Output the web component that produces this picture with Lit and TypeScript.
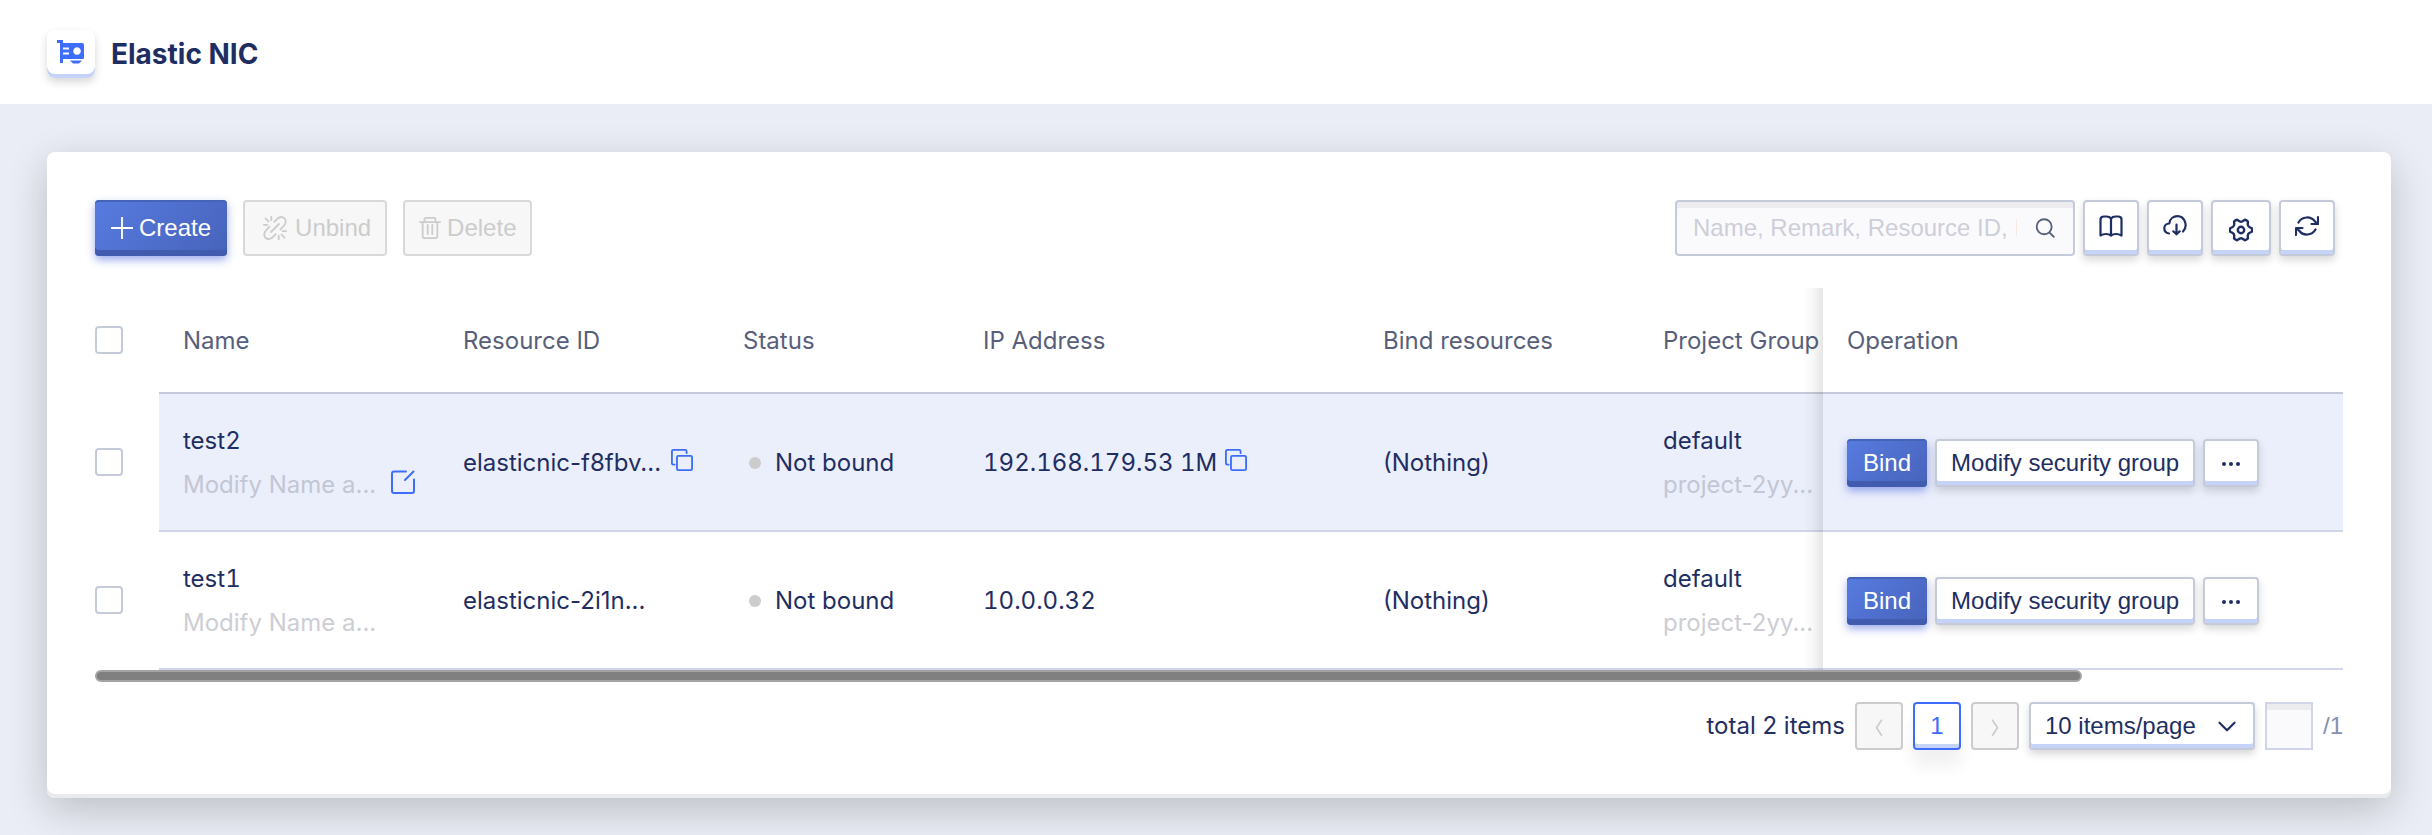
import { LitElement, html, css, svg } from "lit";
import { customElement } from "lit/decorators.js";

interface Nic {
  name: string;
  remark: string;
  id: string;
  ip: string;
  hovered: boolean;
}

const NICS: Nic[] = [
  { name: "test2", remark: "Modify Name a...", id: "elasticnic-f8fbv...", ip: "192.168.179.53 1M", hovered: true },
  { name: "test1", remark: "Modify Name a...", id: "elasticnic-2i1n...", ip: "10.0.0.32", hovered: false },
];

const icon = (body: unknown, size = 24, width = 2) => html`<svg
  class="icon" width=${size} height=${size} viewBox="0 0 24 24" fill="none" stroke="currentColor"
  stroke-width=${width} stroke-linecap="round" stroke-linejoin="round" aria-hidden="true">${body}</svg>`;

// Six rounded teeth with a shallow valley between each pair.
const gearPath = (() => {
  const at = (deg: number, r: number) => {
    const a = (deg * Math.PI) / 180;
    return `${(12 + r * Math.cos(a)).toFixed(2)} ${(12 + r * Math.sin(a)).toFixed(2)}`;
  };
  let d = `M${at(-9, 11)}`;
  for (let k = 0; k < 6; k++) {
    const t = k * 60;
    d += `Q${at(t, 11.4)} ${at(t + 9, 11)}L${at(t + 20, 8.8)}Q${at(t + 30, 7.8)} ${at(t + 40, 8.8)}L${at(t + 51, 11)}`;
  }
  return d + "Z";
})();

const plus = svg`<path d="M12 0v24M0 12h24" stroke-linecap="butt"/>`;
const unlink = svg`<path d="M11.300 5.800L15 2.200Q18.500-.2 21.500 2.300 24 5.500 21.500 9L17.500 13.300M12.700 18.200L9 21.800Q5.500 24.200 2.500 21.700 0 18.500 2.500 15L6.500 10.700M8 16l8-8M8.300.8v3.400M2.500 2.300l3 3M.8 8.800h3.600M15.700 19.800v3.400M18.500 18.700l3 3M19.600 15.200h3.600"/>`;
const trash = svg`<path d="M1 5.500h22M6 5V2.500q0-1.500 1.500-1.500h9q1.500 0 1.500 1.500V5M4 6v15q0 2 2 2h12q2 0 2-2V6M9.500 8.500v10M14.500 8.500v10"/>`;
const search = svg`<circle cx="11" cy="10.500" r="9"/><path d="M17.500 17.500l5 5"/>`;
const book = svg`<path d="M12 4.500Q10.500 2.500 7.500 2.500H5Q1.500 2.500 1.500 5.500V21.500Q4 20 7 20T12 21.500Q14 20 17 20T22.500 21.500V5.500Q22.500 2.500 19 2.500H16.500Q13.500 2.500 12 4.500V21"/>`;
const cloud = svg`<path d="M6 19.500C-.3 18.500-.3 9.500 6.300 9.500 6.800 4.800 10.500 2.200 14.500 2.200 21.500 2.200 25.500 11.500 20 17.500M13.500 10.500v9.500M10.300 17.300l3.200 3 3.200-3"/>`;
const gear = svg`<path d=${gearPath}/><circle cx="12" cy="12" r="3.200"/>`;
const refresh = svg`<path d="M3.500 8.500A9.800 9.800 0 0 1 20 7.500L22 9.500M23 3v7h-6.500M20.500 15.500A9.800 9.800 0 0 1 4 16.500L2 14.500M1 21v-7h6.500"/>`;
const copy = svg`<rect x="6.500" y="7.500" width="16.500" height="15.500" rx="1.500"/><path d="M4 17H2.500Q1 17 1 15.500V2.500Q1 1 2.500 1h13Q17 1 17 2.500v2"/>`;
const edit = svg`<path d="M15 1.500H3Q1 1.500 1 3.500v17.500q0 2 2 2h18q2 0 2-2V9.500M14 10L22.500 1.500"/>`;
const left = svg`<path d="M15 5l-6 9 6 9"/>`;
const right = svg`<path d="M9 5l6 9-6 9"/>`;
const down = svg`<path d="M3 8l9 9 9-9"/>`;
const dots = svg`<g fill="currentColor" stroke="none"><circle cx="5" cy="13" r="2"/><circle cx="12" cy="13" r="2"/><circle cx="19" cy="13" r="2"/></g>`;

@customElement("app-root")
export class AppRoot extends LitElement {
  static styles = css`
    :host {
      display: block;
      min-height: 100vh;
      background: #ebedf6;
      color: #1f2e62;
      font: 24px/44px Inter, sans-serif;
    }
    * { box-sizing: border-box; }
    .icon { display: block; flex: none; }
    .top {
      display: flex;
      align-items: center;
      gap: 16px;
      height: 104px;
      padding: 4px 47px 0;
      background: #fff;
    }
    .logo {
      display: grid;
      place-items: center;
      width: 48px;
      height: 48px;
      padding-bottom: 4px;
      border-radius: 8px;
      box-shadow: inset 0 -4px #c5d3f8, 0 4px 8px rgba(0, 0, 0, .16);
    }
    h1 { margin: 0; font-size: 28px; font-weight: 700; }
    main { padding: 48px 41px 37px 47px; }
    .card {
      padding: 48px;
      background: #fff;
      border-radius: 8px;
      box-shadow: inset 0 -4px #e9eaeb, 0 12px 40px rgba(0, 0, 0, .2);
    }
    .bar, .tools, .actions, .ops, .pager, .cell { display: flex; align-items: center; }
    .bar { justify-content: space-between; margin-bottom: 32px; padding-right: 8px; }
    .actions { gap: 16px; }
    .tools, .ops { gap: 8px; }
    button, select, input { margin: 0; font: inherit; color: inherit; }
    button {
      display: flex;
      align-items: center;
      justify-content: center;
      height: 48px;
      padding: 0 14px;
      border: 2px solid #c5cada;
      border-radius: 4px;
      background: #fff;
      box-shadow: inset 0 -4px #c5d3f8, 0 4px 8px rgba(0, 0, 0, .16);
      font: 24px/44px "Liberation Sans", Arial, sans-serif;
      white-space: nowrap;
    }
    .primary {
      border: 0;
      padding: 0 16px;
      color: #fff;
      background: linear-gradient(135deg, #577be0, #4763ba);
      box-shadow: inset 0 2px #4564b8, inset 0 -6px #415cae, 0 4px 8px rgba(62, 92, 220, .5);
    }
    .actions button { height: 56px; gap: 6px; }
    button:disabled {
      color: #ccc;
      border-color: #d9d9d9;
      background: #f7f7f7;
      box-shadow: none;
    }
    .actions .unbind { gap: 8px; padding: 0 14px 0 18px; }
    .tools button { width: 56px; height: 56px; padding: 0 0 4px; }
    .tools .wide { width: 60px; padding: 4px 0 0; }
    .search {
      display: flex;
      align-items: center;
      width: 400px;
      height: 56px;
      padding: 0 18px 0 16px;
      border: 2px solid #c5cada;
      border-radius: 4px;
      background: #fafafd;
      box-shadow: inset 0 6px #ececef;
      color: #585f7a;
    }
    .search input {
      flex: 1;
      min-width: 0;
      padding: 0;
      border: 0;
      outline: 0;
      background: none;
      margin-right: 18px;
      font-family: "Liberation Sans", Arial, sans-serif;
    }
    ::placeholder { color: #cdced8; opacity: 1; }
    table {
      width: 100%;
      border-collapse: separate;
      border-spacing: 0;
      table-layout: fixed;
    }
    .num { font-variant-numeric: tabular-nums; }
    th, td { padding: 2px 0 0 24px; text-align: left; white-space: nowrap; font-weight: 400; }
    th { height: 106px; color: #585f7a; border-bottom: 2px solid #c5cada; }
    td { height: 138px; border-bottom: 2px solid #d1d5ea; }
    th.tick, td.tick { padding: 0 0 2px; border: 0; background: none; }
    .c-tick { width: 64px; }
    .c-name, .c-bind { width: 280px; }
    .c-status { width: 240px; }
    .c-ip { width: 400px; }
    .c-op { width: 520px; }
    .hovered td { background: #ebeffc; }
    .hovered td.tick { background: none; }
    .op { position: relative; }
    .op::before {
      content: "";
      position: absolute;
      top: 0;
      bottom: -2px;
      right: 100%;
      width: 20px;
      background: linear-gradient(to left, rgba(0, 0, 0, .1), rgba(0, 0, 0, .03) 50%, transparent);
    }
    .muted { color: #cdced4; }
    .hovered .muted { color: #c3c6d4; }
    .check {
      display: block;
      appearance: none;
      width: 28px;
      height: 28px;
      border: 2px solid #c5cada;
      border-radius: 4px;
      background: #fff;
    }
    .cell { gap: 10px; }
    .tight { gap: 8px; }
    .link { height: 30px; padding: 0 0 6px; border: 0; background: none; box-shadow: none; color: #3d6dfa; }
    .name { justify-content: space-between; padding-right: 24px; }
    .state { gap: 14px; padding-left: 6px; }
    .dot { width: 12px; height: 12px; border-radius: 50%; background: #ccc; }
    .thumb { width: 88.4%; height: 12px; border: 2px solid #a3a3a3; border-radius: 6px; background: #808080; }
    .pager { justify-content: flex-end; gap: 10px; margin-top: 20px; }
    .pager button { width: 48px; padding: 0; }
    .pager button:disabled { border-color: #ccc; }
    .pager .current { color: #3d6dfa; border-color: #3d6dfa; box-shadow: inset 0 -4px #c5d3f8, 0 16px 16px rgba(0, 0, 0, .06); }
    .size { display: grid; align-items: center; }
    .size > * { grid-area: 1 / 1; }
    .size .icon { justify-self: end; margin-right: 18px; pointer-events: none; }
    select {
      appearance: none;
      width: 226px;
      height: 48px;
      padding: 0 14px 2px;
      border: 2px solid #c5cada;
      border-radius: 4px;
      background: #fff;
      box-shadow: inset 0 -4px #c5d3f8, 0 4px 8px rgba(0, 0, 0, .16);
      font-family: "Liberation Sans", Arial, sans-serif;
    }
    .jump { width: 48px; height: 48px; border: 2px solid #d1d5ea; background: #fafafd; box-shadow: inset 0 6px #ececef; }
    .of { color: #8390b0; font-family: "Liberation Sans", Arial, sans-serif; }
  `;

  private row(n: Nic) {
    return html`<tr class=${n.hovered ? "hovered" : ""}>
      <td class="tick"><input class="check" type="checkbox" aria-label="Select ${n.name}" /></td>
      <td>
        <div class="num">${n.name}</div>
        <div class="cell name">
          <span class="muted">${n.remark}</span>
          ${n.hovered ? html`<button class="link" aria-label="Edit">${icon(edit)}</button>` : ""}
        </div>
      </td>
      <td><div class="cell">${n.id}${n.hovered ? html`<button class="link" aria-label="Copy ID">${icon(copy, 22)}</button>` : ""}</div></td>
      <td><div class="cell state"><span class="dot"></span>Not bound</div></td>
      <td><div class="cell tight num">${n.ip}${n.hovered ? html`<button class="link" aria-label="Copy IP">${icon(copy, 22)}</button>` : ""}</div></td>
      <td>(Nothing)</td>
      <td><div>default</div><div class="muted">project-2yy...</div></td>
      <td class="op">
        <div class="ops">
          <button class="primary">Bind</button>
          <button>Modify security group</button>
          <button aria-label="More">${icon(dots, 24)}</button>
        </div>
      </td>
    </tr>`;
  }

  render() {
    return html`
      <header class="top">
        <span class="logo">
          <svg width="28" height="28" viewBox="0 0 28 28" fill="#3d6dfa" aria-hidden="true">
            <path fill-rule="evenodd" d="M0 2h6v3h19q2 0 2 2v13q0 1-1 1H6v4H3V5H0zM6 9.500v2h6v-2zM6 14.500v2h6v-2zM20 9.200a3.800 3.800 0 1 0 .1 0z"/>
            <path d="M13 22.500h12l-3 3h-6z"/>
          </svg>
        </span>
        <h1>Elastic NIC</h1>
      </header>
      <main>
        <section class="card">
          <div class="bar">
            <div class="actions">
              <button class="primary">${icon(plus, 22)}Create</button>
              <button class="unbind" disabled>${icon(unlink, 24, 1.8)}Unbind</button>
              <button disabled>${icon(trash, 22)}Delete</button>
            </div>
            <div class="tools">
              <label class="search">
                <input type="text" aria-label="Search" placeholder="Name, Remark, Resource ID, IP" />
                ${icon(search, 20, 2.2)}
              </label>
              <button aria-label="Documentation">${icon(book, 24, 2.2)}</button>
              <button aria-label="Download">${icon(cloud, 24, 2.2)}</button>
              <button class="wide" aria-label="Settings">${icon(gear, 24, 2.4)}</button>
              <button aria-label="Refresh">${icon(refresh, 24, 2.2)}</button>
            </div>
          </div>
          <table>
            <colgroup>
              <col class="c-tick" /><col class="c-name" /><col class="c-name" /><col class="c-status" />
              <col class="c-ip" /><col class="c-bind" /><col /><col class="c-op" />
            </colgroup>
            <thead>
              <tr>
                <th class="tick"><input class="check" type="checkbox" aria-label="Select all" /></th>
                <th>Name</th><th>Resource ID</th><th>Status</th><th>IP Address</th>
                <th>Bind resources</th><th>Project Group</th><th class="op">Operation</th>
              </tr>
            </thead>
            <tbody>${NICS.map((n) => this.row(n))}</tbody>
          </table>
          <div class="thumb"></div>
          <nav class="pager" aria-label="Pagination">
            <span>total 2 items</span>
            <button disabled aria-label="Previous">${icon(left, 20)}</button>
            <button class="current">1</button>
            <button disabled aria-label="Next">${icon(right, 20)}</button>
            <div class="size">
              <select aria-label="Page size"><option>10 items/page</option></select>
              ${icon(down, 20, 2.6)}
            </div>
            <input class="jump" type="text" aria-label="Go to page" />
            <span class="of">/1</span>
          </nav>
        </section>
      </main>
    `;
  }
}
